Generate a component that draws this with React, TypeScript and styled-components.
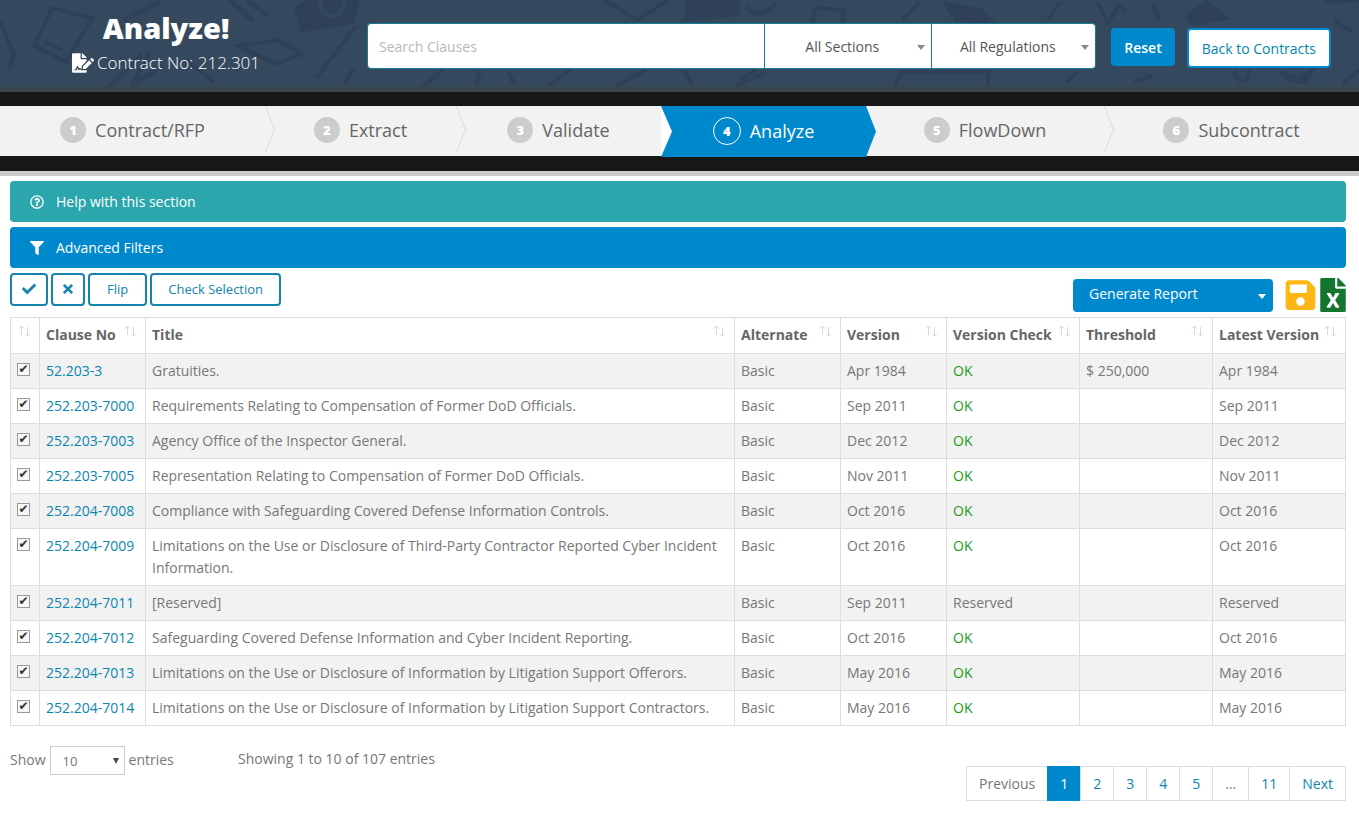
import React, { useState } from 'react';
import styled, { createGlobalStyle, css } from 'styled-components';
import {
  FaCheck,
  FaFileExcel,
  FaFileSignature,
  FaFilter,
  FaRegQuestionCircle,
  FaSave,
  FaTimes,
} from 'react-icons/fa';

const GlobalStyle = createGlobalStyle`
  *, *::before, *::after { box-sizing: border-box; }
  body {
    margin: 0;
    background: #fff;
    color: #777;
    font-family: "Open Sans", "Noto Sans", sans-serif;
    font-size: 14px;
    line-height: 22px;
  }
  button, input, select { font: inherit; }
`;

/* ---------- Banner ---------- */

const Banner = styled.header`
  position: relative;
  display: flex;
  align-items: flex-start;
  height: 92px;
  padding-right: 28px;
  background: #34495e;
  border-bottom: 5px solid #3a454d;
  overflow: hidden;
`;

const Doodles = styled.svg`
  position: absolute;
  inset: 0;
  width: 100%;
  height: 100%;
  fill: none;
  stroke: #2e4159;
  stroke-width: 4;
`;

const Heading = styled.div`
  position: relative;
  flex: 0 0 332px;
  padding-top: 9px;
  text-align: center;
  color: #fff;
`;

const PageTitle = styled.h1`
  margin: 0;
  font-size: 29px;
  line-height: 38px;
  font-weight: 800;
`;

const ContractNo = styled.p`
  display: flex;
  align-items: center;
  justify-content: center;
  gap: 3px;
  margin: 3px 0 0;
  font-size: 17px;
  line-height: 26px;
  font-weight: 300;

  svg { width: 22px; height: 20px; }
`;

const SearchForm = styled.form`
  position: relative;
  display: flex;
  flex: 1;
  align-items: flex-start;
  padding: 23px 0 0 35px;
`;

const SearchGroup = styled.div`
  display: flex;
  flex: 1;
  height: 46px;
  margin-right: 15px;
  border: 1px solid #1a7a92;
  border-radius: 4px;
  background: #fff;
  overflow: hidden;
`;

const SearchInput = styled.input`
  flex: 1;
  min-width: 0;
  padding: 2px 11px 0;
  border: 0;
  outline: 0;
  color: #555;
  background: transparent;

  &::placeholder { color: #b8b8b8; }
`;

const SelectBox = styled.div<{ $width: number }>`
  position: relative;
  flex: 0 0 ${(p) => p.$width}px;
  border-left: 1px solid #1a7a92;

  &::after {
    content: '';
    position: absolute;
    top: 21px;
    right: 6px;
    border: 4px solid transparent;
    border-top: 5px solid #888;
    border-bottom: 0;
    pointer-events: none;
  }

  select {
    width: 100%;
    height: 100%;
    padding: 2px 20px 0 8px;
    border: 0;
    appearance: none;
    text-align: center;
    color: #555;
    background: transparent;
  }
`;

const ResetButton = styled.button`
  height: 38px;
  margin: 5px 12px 0 0;
  padding: 2px 13px 0;
  border: 0;
  border-radius: 4px;
  background: #08c;
  color: #fff;
  font-weight: 600;
`;

const BackButton = styled.a`
  height: 40px;
  margin-top: 5px;
  padding: 0 13px;
  border: 2px solid #08c;
  border-radius: 4px;
  background: #fff;
  color: #08a;
  line-height: 37px;
  text-decoration: none;
`;

/* ---------- Wizard steps ---------- */

const StepBand = styled.nav`
  padding: 14px 0 15px;
  background: #171717;
  border-bottom: 5px solid #ccc9cb;
  box-sizing: content-box;
`;

const StepList = styled.ol`
  display: flex;
  height: 50px;
  margin: 0;
  padding: 0;
  list-style: none;
  background: #f2f2f2;
`;

const StepItem = styled.li<{ $weight: number; $active: boolean }>`
  position: relative;
  flex: ${(p) => p.$weight} 1 0;

  ${(p) =>
    p.$active &&
    css`
      z-index: 1;
      background: linear-gradient(to right, #fff 12px, transparent 12px);

      &::before {
        content: '';
        position: absolute;
        inset: 0 -10px -1px 0;
        background: #08c;
        clip-path: polygon(0 0, calc(100% - 10px) 0, 100% 50%, calc(100% - 10px) 100%, 0 100%, 11px 50%);
      }
    `}
`;

const StepLink = styled.a<{ $active: boolean }>`
  position: relative;
  display: flex;
  align-items: center;
  justify-content: center;
  gap: 9px;
  height: ${(p) => (p.$active ? 49 : 47)}px;
  color: ${(p) => (p.$active ? '#fff' : '#666')};
  font-size: 18px;
  text-decoration: none;
`;

const StepNumber = styled.span<{ $active: boolean }>`
  width: ${(p) => (p.$active ? 28 : 26)}px;
  height: ${(p) => (p.$active ? 28 : 26)}px;
  border: ${(p) => (p.$active ? '1px solid #fff' : '0')};
  border-radius: 50%;
  background: ${(p) => (p.$active ? 'transparent' : '#ccc')};
  color: #fff;
  font-size: 13px;
  line-height: 26px;
  font-weight: 800;
  text-align: center;
`;

const StepDivider = styled.svg`
  position: absolute;
  top: 0;
  right: -10px;
  width: 10px;
  height: 46px;
  fill: none;
  stroke: #dcdcdc;
`;

/* ---------- Content ---------- */

const Content = styled.main`
  padding: 5px 13px 12px 10px;
`;

const PanelBar = styled.button<{ $color: string }>`
  display: flex;
  align-items: center;
  gap: 12px;
  width: 100%;
  height: 41px;
  margin-bottom: 5px;
  padding: 0 20px;
  border: 0;
  border-radius: 4px;
  background: ${(p) => p.$color};
  color: #fff;
  text-align: left;

  svg { width: 14px; height: 14px; }
`;

const Toolbar = styled.div`
  display: flex;
  justify-content: space-between;
  margin-bottom: 5px;
`;

const ToolGroup = styled.div<{ $gap: number; $top: number }>`
  display: flex;
  align-items: flex-start;
  gap: ${(p) => p.$gap}px;
  padding-top: ${(p) => p.$top}px;
`;

const OutlineButton = styled.button<{ $pad: number }>`
  display: flex;
  align-items: center;
  height: 33px;
  padding: 0 ${(p) => p.$pad}px 2px;
  border: 2px solid #1583ab;
  border-radius: 4px;
  background: #fff;
  color: #1583ab;
  font-size: 13px;

  svg { width: 14px; height: 14px; }
`;

const ReportButton = styled.button`
  display: flex;
  align-items: center;
  justify-content: space-between;
  width: 200px;
  height: 33px;
  margin: 1px 8px 0 0;
  padding: 0 7px 3px 16px;
  border: 0;
  border-radius: 4px;
  background: #08c;
  color: #fff;

  &::after {
    content: '';
    margin-top: 4px;
    border: 4px solid transparent;
    border-top: 5px solid #fff;
    border-bottom: 0;
  }
`;

const IconButton = styled.button<{ $color: string; $width: number }>`
  display: flex;
  padding: 0;
  border: 0;
  background: none;
  color: ${(p) => p.$color};

  svg { width: ${(p) => p.$width}px; height: 34px; }
`;

/* ---------- Table ---------- */

const DataTable = styled.table`
  width: 100%;
  border-collapse: collapse;
  table-layout: fixed;
  color: #777;
`;

const HeadCell = styled.th<{ $width?: number }>`
  width: ${(p) => (p.$width ? `${p.$width}px` : 'auto')};
  height: 36px;
  padding: 0;
  border: 1px solid #ddd;
`;

const SortButton = styled.button`
  display: flex;
  align-items: center;
  justify-content: space-between;
  width: 100%;
  padding: 0 8px 2px 6px;
  border: 0;
  background: none;
  color: #666;
  font-weight: 700;
  white-space: nowrap;
`;

const SortIcon = styled.svg`
  flex: none;
  width: 13px;
  height: 12px;
  margin: 0 0 8px auto;
  fill: none;
  stroke: #d8d8d8;
`;

const Row = styled.tr`
  &:nth-child(odd) { background: #f2f2f2; }
`;

const Cell = styled.td`
  padding: 6px;
  border: 1px solid #ddd;
  vertical-align: top;
`;

const CheckCell = styled(Cell)`
  padding: 9px 6px;
  line-height: 0;
`;

const CheckBox = styled.input`
  display: block;
  width: 13px;
  height: 13px;
  margin: 0;
  border: 1px solid #999;
  appearance: none;
  background: #f7f7f7;

  &:checked::before {
    content: '✔';
    display: block;
    color: #333;
    font-family: "DejaVu Sans", sans-serif;
    font-size: 12px;
    line-height: 10px;
    text-align: center;
  }
`;

const ClauseLink = styled.a`
  color: #0a86ae;
  text-decoration: none;
`;

const Status = styled.span<{ $ok: boolean }>`
  color: ${(p) => (p.$ok ? '#1a9a1a' : 'inherit')};
`;

/* ---------- Footer ---------- */

const TableFooter = styled.footer`
  display: flex;
  align-items: flex-start;
  padding-top: 20px;
`;

const LengthLabel = styled.label`
  display: flex;
  align-items: flex-start;
  gap: 4px;
  flex: 0 0 228px;
  line-height: 28px;
`;

const LengthBox = styled.span`
  position: relative;

  &::after {
    content: '';
    position: absolute;
    top: 12px;
    right: 6px;
    border: 3px solid transparent;
    border-top: 6px solid #444;
    border-bottom: 0;
    pointer-events: none;
  }

  select {
    display: block;
    width: 75px;
    height: 29px;
    padding: 0 12px;
    border: 1px solid #ccc;
    border-radius: 0;
    appearance: none;
    background: #fff;
    color: #777;
    font-size: 13px;
  }
`;

const Info = styled.div`
  flex: 1;
  padding-top: 2px;
`;

const Pages = styled.ul`
  display: flex;
  margin: 20px 0 0;
  padding: 0;
  list-style: none;
`;

const PageLink = styled.a<{ $kind: 'link' | 'current' | 'muted' }>`
  display: block;
  height: 35px;
  margin-left: -1px;
  padding: 0 12px;
  border: 1px solid ${(p) => (p.$kind === 'current' ? '#08c' : '#ddd')};
  background: ${(p) => (p.$kind === 'current' ? '#08c' : '#fff')};
  color: ${(p) => (p.$kind === 'current' ? '#fff' : p.$kind === 'muted' ? '#777' : '#0a86ae')};
  line-height: 34px;
  text-decoration: none;
`;

/* ---------- Data ---------- */

const steps = [
  { label: 'Contract/RFP', weight: 265 },
  { label: 'Extract', weight: 191 },
  { label: 'Validate', weight: 205 },
  { label: 'Analyze', weight: 205 },
  { label: 'FlowDown', weight: 238 },
  { label: 'Subcontract', weight: 255 },
];
const activeStep = 3;

const columns: { label: string; width?: number }[] = [
  { label: '', width: 29 },
  { label: 'Clause No', width: 106 },
  { label: 'Title' },
  { label: 'Alternate', width: 106 },
  { label: 'Version', width: 106 },
  { label: 'Version Check', width: 133 },
  { label: 'Threshold', width: 133 },
  { label: 'Latest Version', width: 133 },
];

const clauses = [
  { no: '52.203-3', title: 'Gratuities.', version: 'Apr 1984', threshold: '$ 250,000' },
  { no: '252.203-7000', title: 'Requirements Relating to Compensation of Former DoD Officials.', version: 'Sep 2011' },
  { no: '252.203-7003', title: 'Agency Office of the Inspector General.', version: 'Dec 2012' },
  { no: '252.203-7005', title: 'Representation Relating to Compensation of Former DoD Officials.', version: 'Nov 2011' },
  { no: '252.204-7008', title: 'Compliance with Safeguarding Covered Defense Information Controls.', version: 'Oct 2016' },
  { no: '252.204-7009', title: 'Limitations on the Use or Disclosure of Third-Party Contractor Reported Cyber Incident Information.', version: 'Oct 2016' },
  { no: '252.204-7011', title: '[Reserved]', version: 'Sep 2011', reserved: true },
  { no: '252.204-7012', title: 'Safeguarding Covered Defense Information and Cyber Incident Reporting.', version: 'Oct 2016' },
  { no: '252.204-7013', title: 'Limitations on the Use or Disclosure of Information by Litigation Support Offerors.', version: 'May 2016' },
  { no: '252.204-7014', title: 'Limitations on the Use or Disclosure of Information by Litigation Support Contractors.', version: 'May 2016' },
];

const pages = ['Previous', '1', '2', '3', '4', '5', '…', '11', 'Next'];

const pageKind = (page: string) =>
  page === '1' ? 'current' : page === 'Previous' || page === '…' ? 'muted' : 'link';

function BannerPattern() {
  return (
    <Doodles viewBox="0 0 1359 87" preserveAspectRatio="xMidYMid slice" aria-hidden="true">
      <path d="M0 22 14 55 9 70M52 8l-18 38 32 16 26-44zM44 42l18 8M108 88l34-34M124 20l36-18M150 52l-18 34 30-20M186 60l28 22" />
      <path d="M230 0l24 22M246 0l22 16M238 46l40-6 24 14-26 10z" />
      <path fill="#2e4159" d="M296 8l14-8h48l-6 22-50 8z" />
      <circle cx="332" cy="4" r="12" stroke="#34495e" />
      <path d="M356 26l-40 52M344 84l10-16M604 0l34 20 30-20M442 70l-20 18M480 70l-4 16M508 72l6 12M570 70l-22 16M616 86l30-16M684 70l8 14M736 86l30-14" />
      <path fill="#2e4159" d="M688 0h50v14l-52 6zM946 4l34 6 12 12-36-2z" />
      <path d="M746 6c10 14 20 6 30-2M812 22l4-14 28 2-2 12M740 80l16-10M894 88l8-16h86v14M902 20l18-18M1048 20l12-18M1098 2l10 22M1108 24l10-18 8 4M1152 2l8 18M1066 82l12-10M1134 82l18-6" />
      <path fill="#2e4159" d="M1188 16l18-14 20 16-34 6zM1284 74l14 4 14-8-6 12-18-2z" />
      <path d="M1236 70a7 7 0 1 0 12 0M1342 84l17-14M1325 2l34-2M1334 20l18 12" />
    </Doodles>
  );
}

function SortArrows() {
  return (
    <SortIcon viewBox="0 0 13 12" aria-hidden="true">
      <path d="M3.5 10V1M1 3.5 3.5 1 6 3.5M9.5 2v9M7 8.5l2.5 2.5L12 8.5" />
    </SortIcon>
  );
}

export default function App() {
  const [selected, setSelected] = useState<boolean[]>(clauses.map(() => true));

  const toggle = (index: number) =>
    setSelected((rows) => rows.map((on, i) => (i === index ? !on : on)));

  return (
    <>
      <GlobalStyle />
      <Banner>
        <BannerPattern />
        <Heading>
          <PageTitle>Analyze!</PageTitle>
          <ContractNo>
            <FaFileSignature aria-hidden="true" />
            Contract No: 212.301
          </ContractNo>
        </Heading>
        <SearchForm onSubmit={(e) => e.preventDefault()}>
          <SearchGroup>
            <SearchInput type="text" placeholder="Search Clauses" aria-label="Search Clauses" />
            <SelectBox $width={167}>
              <select aria-label="Section">
                <option>All Sections</option>
              </select>
            </SelectBox>
            <SelectBox $width={164}>
              <select aria-label="Regulation">
                <option>All Regulations</option>
              </select>
            </SelectBox>
          </SearchGroup>
          <ResetButton type="reset">Reset</ResetButton>
          <BackButton href="#contracts">Back to Contracts</BackButton>
        </SearchForm>
      </Banner>

      <StepBand aria-label="Progress">
        <StepList>
          {steps.map((step, i) => {
            const active = i === activeStep;
            const divided = !active && i !== activeStep - 1 && i < steps.length - 1;
            return (
              <StepItem key={step.label} $weight={step.weight} $active={active}>
                <StepLink href={`#step-${i + 1}`} $active={active} aria-current={active ? 'step' : undefined}>
                  <StepNumber $active={active}>{i + 1}</StepNumber>
                  {step.label}
                </StepLink>
                {divided && (
                  <StepDivider viewBox="0 0 10 46" aria-hidden="true">
                    <path d="M0.5 0 9.5 24 0.5 46" />
                  </StepDivider>
                )}
              </StepItem>
            );
          })}
        </StepList>
      </StepBand>

      <Content>
        <PanelBar type="button" $color="#2ba6ad">
          <FaRegQuestionCircle aria-hidden="true" />
          Help with this section
        </PanelBar>
        <PanelBar type="button" $color="#08c">
          <FaFilter aria-hidden="true" />
          Advanced Filters
        </PanelBar>

        <Toolbar>
          <ToolGroup $gap={3} $top={0}>
            <OutlineButton $pad={10} aria-label="Select all" onClick={() => setSelected(clauses.map(() => true))}>
              <FaCheck />
            </OutlineButton>
            <OutlineButton $pad={8} aria-label="Clear all" onClick={() => setSelected(clauses.map(() => false))}>
              <FaTimes />
            </OutlineButton>
            <OutlineButton $pad={17} onClick={() => setSelected((rows) => rows.map((on) => !on))}>
              Flip
            </OutlineButton>
            <OutlineButton $pad={16}>Check Selection</OutlineButton>
          </ToolGroup>
          <ToolGroup $gap={4} $top={5}>
            <ReportButton type="button">Generate Report</ReportButton>
            <IconButton $color="#fdb714" $width={31} aria-label="Save">
              <FaSave />
            </IconButton>
            <IconButton $color="#14752f" $width={26} aria-label="Export to Excel">
              <FaFileExcel />
            </IconButton>
          </ToolGroup>
        </Toolbar>

        <DataTable>
          <thead>
            <tr>
              {columns.map((column) => (
                <HeadCell key={column.label} $width={column.width} scope="col">
                  <SortButton type="button" aria-label={column.label || 'Selected'}>
                    {column.label}
                    <SortArrows />
                  </SortButton>
                </HeadCell>
              ))}
            </tr>
          </thead>
          <tbody>
            {clauses.map((clause, i) => (
              <Row key={clause.no}>
                <CheckCell>
                  <CheckBox
                    type="checkbox"
                    aria-label={`Select ${clause.no}`}
                    checked={selected[i]}
                    onChange={() => toggle(i)}
                  />
                </CheckCell>
                <Cell>
                  <ClauseLink href={`#${clause.no}`}>{clause.no}</ClauseLink>
                </Cell>
                <Cell>{clause.title}</Cell>
                <Cell>Basic</Cell>
                <Cell>{clause.version}</Cell>
                <Cell>
                  <Status $ok={!clause.reserved}>{clause.reserved ? 'Reserved' : 'OK'}</Status>
                </Cell>
                <Cell>{clause.threshold}</Cell>
                <Cell>{clause.reserved ? 'Reserved' : clause.version}</Cell>
              </Row>
            ))}
          </tbody>
        </DataTable>

        <TableFooter>
          <LengthLabel>
            Show
            <LengthBox>
              <select defaultValue="10">
                <option>10</option>
                <option>25</option>
                <option>50</option>
              </select>
            </LengthBox>
            entries
          </LengthLabel>
          <Info>Showing 1 to 10 of 107 entries</Info>
          <Pages>
            {pages.map((page) => (
              <li key={page}>
                <PageLink href="#page" $kind={pageKind(page)}>
                  {page}
                </PageLink>
              </li>
            ))}
          </Pages>
        </TableFooter>
      </Content>
    </>
  );
}
